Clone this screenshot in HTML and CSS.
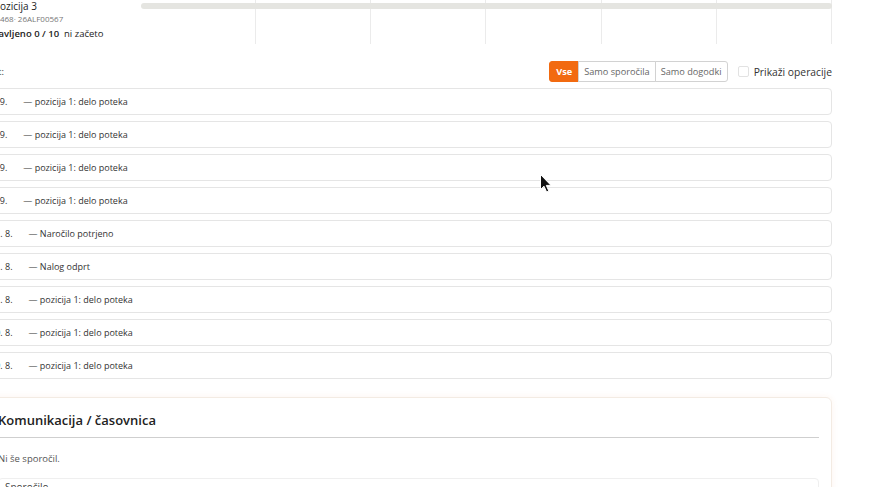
FILE: index.html
```html
<!DOCTYPE html>
<html lang="sl">
<head>
<meta charset="utf-8">
<title>Nalog 2025-0468</title>
<link rel="stylesheet" href="styles.css">
</head>
<body>
<div class="page">
  <section class="plan">
    <div class="plan-label">
      <div class="plan-name">Pozicija 3</div>
      <div class="plan-code">2025-0468· 26ALF00567</div>
      <div class="plan-state"><b>Opravljeno 0 / 10</b>&nbsp; ni začeto</div>
    </div>
    <div class="plan-track">
      <div class="plan-col"></div>
      <div class="plan-col"></div>
      <div class="plan-col"></div>
      <div class="plan-col"></div>
      <div class="plan-col"></div>
      <div class="plan-col"></div>
      <div class="plan-bar"></div>
    </div>
  </section>

  <div class="toolbar">
    <div class="toolbar-label"><span>Zadnja aktivnost:</span></div>
    <div class="toolbar-right">
      <div class="seg">
        <button class="seg-btn active">Vse</button>
        <button class="seg-btn">Samo sporočila</button>
        <button class="seg-btn">Samo dogodki</button>
      </div>
      <label class="check"><span class="check-box"></span>Prikaži operacije</label>
    </div>
  </div>

  <ul class="events">
    <li class="event"><span class="ev-date">5. 9.</span><span>— pozicija 1: delo poteka</span></li>
    <li class="event"><span class="ev-date">5. 9.</span><span>— pozicija 1: delo poteka</span></li>
    <li class="event"><span class="ev-date">5. 9.</span><span>— pozicija 1: delo poteka</span></li>
    <li class="event"><span class="ev-date">5. 9.</span><span>— pozicija 1: delo poteka</span></li>
    <li class="event"><span class="ev-date">31. 8.</span><span>— Naročilo potrjeno</span></li>
    <li class="event"><span class="ev-date">31. 8.</span><span>— Nalog odprt</span></li>
    <li class="event"><span class="ev-date">31. 8.</span><span>— pozicija 1: delo poteka</span></li>
    <li class="event"><span class="ev-date">30. 8.</span><span>— pozicija 1: delo poteka</span></li>
    <li class="event"><span class="ev-date">29. 8.</span><span>— pozicija 1: delo poteka</span></li>
  </ul>

  <section class="card">
    <h2 class="card-title">Komunikacija / časovnica</h2>
    <p class="card-empty">Ni še sporočil.</p>
    <div class="composer">Sporočilo</div>
  </section>

  <svg class="cursor" width="12" height="19" viewBox="0 0 12 19" aria-hidden="true">
    <path d="M0.5 0.5 L0.5 15.5 L4 12.2 L6.6 18 L8.8 17 L6.3 11.4 L11 11.4 Z" fill="#111" stroke="#fff" stroke-width="1"/>
  </svg>
</div>
</body>
</html>
```

FILE: styles.css
```css
* { box-sizing: border-box; }

html, body {
  margin: 0;
  padding: 0;
  background: #fff;
  overflow: hidden;
}

body {
  font-family: "Open Sans", "Liberation Sans", sans-serif;
  color: #333;
}

.page {
  position: relative;
  width: 852px;
  margin-left: -20px;
}

/* plan row: label + timeline grid */
.plan {
  display: flex;
  height: 44px;
}

.plan-label {
  width: 161px;
  flex: none;
  padding-left: 14px;
  white-space: nowrap;
}

.plan-name {
  font-size: 10px;
  line-height: 13px;
  color: #222;
}

.plan-code {
  font-size: 8px;
  line-height: 10px;
  margin-top: 1px;
  margin-left: -19.5px;
  color: #777;
}

.plan-state {
  font-size: 9.5px;
  line-height: 14px;
  margin-top: 3px;
  margin-left: -13px;
  color: #222;
}

.plan-state b { font-weight: 600; }

.plan-track {
  flex: 1;
  position: relative;
  display: grid;
  grid-template-columns: repeat(6, 1fr);
}

.plan-col {
  border-right: 1px solid #ebebeb;
}

.plan-bar {
  position: absolute;
  top: 3px;
  left: 0;
  right: 0;
  height: 6px;
  border-radius: 3px;
  background: #e5e5e1;
}

/* filter toolbar */
.toolbar {
  display: flex;
  justify-content: space-between;
  align-items: center;
  height: 21px;
  margin-top: 17px;
}

.toolbar-label {
  width: 24px;
  display: flex;
  justify-content: flex-end;
  white-space: nowrap;
  font-size: 9.5px;
  color: #333;
}

.toolbar-right {
  display: flex;
  align-items: center;
  gap: 10px;
}

.seg {
  display: flex;
  height: 21px;
}

.seg-btn {
  font-family: inherit;
  font-size: 9.2px;
  color: #666;
  background: #fff;
  border: 1px solid #d2d2d2;
  margin: 0 0 0 -1px;
  padding: 0 5px;
  height: 21px;
  cursor: pointer;
}

.seg-btn:first-child {
  margin-left: 0;
  border-radius: 3px 0 0 3px;
}

.seg-btn:last-child { border-radius: 0 3px 3px 0; }

.seg-btn.active {
  background: #f26a10;
  border-color: #f26a10;
  color: #fff;
  font-weight: 700;
  padding: 0 6px;
}

.check {
  display: flex;
  align-items: center;
  gap: 5px;
  font-size: 10.3px;
  color: #333;
}

.check-box {
  width: 11px;
  height: 11px;
  border: 1px solid #e2e2e2;
  border-radius: 2px;
  background: #fff;
}

/* event list */
.events {
  list-style: none;
  margin: 6px 0 0;
  padding: 0;
  display: flex;
  flex-direction: column;
  gap: 6px;
}

.event {
  height: 27px;
  border: 1px solid #e5e5e5;
  border-radius: 4px;
  padding: 0 9px;
  display: flex;
  align-items: center;
  font-size: 9px;
  color: #333;
  white-space: nowrap;
}

.ev-date {
  margin-right: 16px;
}

/* communication card */
.card {
  margin-top: 18px;
  border: 1px solid #f3ebe3;
  border-radius: 6px;
  padding: 12px 12px 10px 17px;
  box-shadow: 0 0 7px rgba(240, 120, 40, 0.07);
}

.card-title {
  margin: 0;
  font-size: 13px;
  line-height: 20px;
  font-weight: 600;
  color: #222;
  padding-bottom: 7px;
  border-bottom: 1px solid #cfcfcf;
}

.card-empty {
  margin: 14px 0 0;
  font-size: 9.5px;
  line-height: 14px;
  color: #555;
}

.composer {
  margin-top: 12px;
  border: 1px solid #efefef;
  border-radius: 4px;
  padding: 1px 6px;
  height: 40px;
  font-size: 10px;
  color: #444;
}

.cursor {
  position: absolute;
  left: 560px;
  top: 174px;
}
```
